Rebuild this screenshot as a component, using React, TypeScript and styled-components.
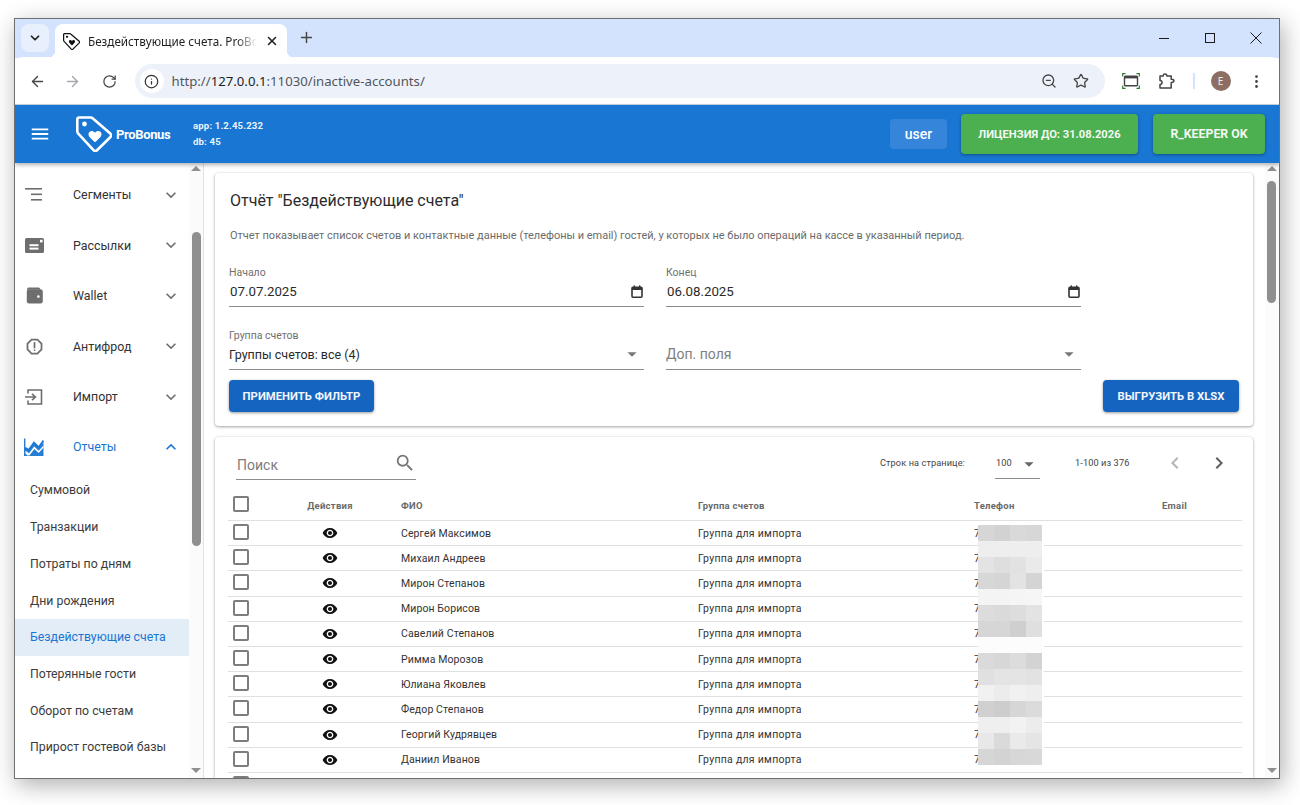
import React from 'react';
import styled, { createGlobalStyle } from 'styled-components';
import { ArrowLeft, ArrowRight, ChevronDown, Info, MoreVertical, Plus, RotateCw, Star, X, ZoomOut } from 'lucide-react';
import {
  MdArrowDropDown,
  MdChevronLeft,
  MdChevronRight,
  MdKeyboardArrowDown,
  MdKeyboardArrowUp,
  MdMenu,
  MdOutlineReport,
  MdSearch,
  MdVisibility,
} from 'react-icons/md';

const GlobalStyle = createGlobalStyle`
  html, body {
    margin: 0;
    padding: 0;
    height: 100%;
    background: #fff;
    overflow: hidden;
  }
  * { box-sizing: border-box; }
`;

const BrowserWindow = styled.div`
  width: 1266px;
  height: 761px;
  margin: 18px 0 0 14px;
  border: 1px solid #6f6f6f;
  box-shadow: 3px 6px 22px rgba(0, 0, 0, 0.32);
  display: flex;
  flex-direction: column;
  overflow: hidden;
  font-family: Roboto, "Liberation Sans", sans-serif;
  background: #fff;
`;

/* browser chrome */
const TabStrip = styled.div`
  height: 39px;
  flex: none;
  background: #d3e3fd;
  display: flex;
  align-items: flex-start;
  padding: 5px 0 0 6px;
  font-family: "Noto Sans", "Open Sans", sans-serif;
`;

const TabListButton = styled.div`
  width: 28px;
  height: 28px;
  border-radius: 8px;
  background: #e8f0fe;
  display: flex;
  align-items: center;
  justify-content: center;
  color: #1f1f1f;
  margin-right: 6px;
`;

const Tab = styled.div`
  position: relative;
  width: 232px;
  height: 34px;
  background: #fff;
  border-radius: 8px 8px 0 0;
  display: flex;
  align-items: center;
  padding: 0 8px;
  gap: 8px;
  &::after {
    content: '';
    position: absolute;
    right: -8px;
    bottom: 0;
    width: 8px;
    height: 8px;
    background: radial-gradient(circle at 100% 0, transparent 8px, #fff 8.5px);
  }
  &::before {
    content: '';
    position: absolute;
    left: -8px;
    bottom: 0;
    width: 8px;
    height: 8px;
    background: radial-gradient(circle at 0 0, transparent 8px, #fff 8.5px);
  }
`;

const TabTitle = styled.div`
  flex: 1;
  font-size: 11.7px;
  color: #1f1f1f;
  white-space: nowrap;
  overflow: hidden;
  -webkit-mask-image: linear-gradient(90deg, #000 88%, transparent);
  mask-image: linear-gradient(90deg, #000 88%, transparent);
`;

const NewTab = styled.div`
  margin: 5px 0 0 11px;
  color: #444;
  display: flex;
`;

const WindowControls = styled.div`
  margin-left: auto;
  display: flex;
  align-items: center;
  height: 28px;
  padding-right: 16px;
  gap: 32px;
`;

const ControlIcon = styled.svg`
  width: 14px;
  height: 14px;
  display: block;
  stroke: #1a1a1a;
  fill: none;
  stroke-width: 1;
`;

const Toolbar = styled.div`
  height: 48px;
  flex: none;
  background: #fff;
  border-radius: 8px 8px 0 0;
  margin-top: -1px;
  border-bottom: 1px solid #c9d3e3;
  display: flex;
  align-items: center;
  padding: 1px 0 0 4px;
  color: #444;
`;

const NavButton = styled.div<{ $disabled?: boolean; $width: number }>`
  width: ${(p) => p.$width}px;
  flex: none;
  display: flex;
  justify-content: center;
  color: ${(p) => (p.$disabled ? '#a5a8ad' : '#474747')};
`;

const Omnibox = styled.div`
  width: 970px;
  height: 34px;
  flex: none;
  margin-left: 5.5px;
  margin-right: 8px;
  border-radius: 17px;
  background: #edf2fa;
  display: flex;
  align-items: center;
  padding: 0 16px 0 5px;
`;

const InfoBadge = styled.div`
  width: 24px;
  height: 24px;
  border-radius: 50%;
  background: #fff;
  display: flex;
  align-items: center;
  justify-content: center;
  color: #333;
  margin-right: 8px;
`;

const Url = styled.div`
  flex: 1;
  font-size: 13.2px;
  color: #53565a;
  font-family: "Noto Sans", sans-serif;
  b { font-weight: 400; color: #1f1f1f; }
`;

const OmniActions = styled.div`
  display: flex;
  gap: 16px;
  color: #474747;
  align-items: center;
`;

const ToolbarSeparator = styled.div`
  width: 2px;
  height: 16px;
  background: #d3e3fd;
  margin: 0 16px 0 8px;
`;

const Avatar = styled.div`
  width: 20px;
  height: 20px;
  border-radius: 50%;
  background: #8d6e63;
  color: #f3ece9;
  font-size: 10px;
  font-family: "Noto Sans", sans-serif;
  display: flex;
  align-items: center;
  justify-content: center;
  margin-right: 17px;
`;

/* app header */
const AppBar = styled.header`
  height: 58px;
  flex: none;
  background: #1976d2;
  display: flex;
  align-items: center;
  position: relative;
  z-index: 3;
  padding: 0 14px;
  color: #fff;
  box-shadow: 0 2px 4px rgba(0, 0, 0, 0.3);
`;

const Burger = styled.div`
  display: flex;
  width: 22px;
  margin-right: 25px;
`;

const Brand = styled.div`
  display: flex;
  align-items: center;
  gap: 4px;
  width: 117px;
  font-size: 13px;
  font-weight: 700;
  letter-spacing: -0.35px;
`;

const Versions = styled.div`
  font-size: 9.6px;
  font-weight: 700;
  line-height: 16px;
  letter-spacing: 0.15px;
  margin-top: -1px;
  color: #eaf3fc;
`;

const UserChip = styled.div`
  margin-left: auto;
  width: 57px;
  height: 30px;
  border-radius: 4px;
  background: #3585db;
  display: flex;
  align-items: center;
  justify-content: center;
  font-size: 14px;
  font-weight: 500;
  margin-right: 14px;
`;

const StatusGroup = styled.div`
  display: flex;
  gap: 15px;
`;

const StatusButton = styled.div<{ $width: number; $size: number }>`
  width: ${(p) => p.$width}px;
  height: 40px;
  border-radius: 4px;
  background: #4caf50;
  display: flex;
  align-items: center;
  justify-content: center;
  font-size: ${(p) => p.$size}px;
  font-weight: 700;
  color: #f3f9f3;
  box-shadow: 0 1px 3px rgba(0, 0, 0, 0.35);
`;

/* body */
const Body = styled.div`
  flex: 1;
  min-height: 0;
  display: flex;
`;

const Sidebar = styled.aside`
  width: 174px;
  flex: none;
  padding-top: 6.8px;
  overflow: hidden;
  background: #fff;
`;

const ScrollTrack = styled.div`
  position: relative;
  width: 14px;
  flex: none;
  background: #fbfbfb;
`;

const ScrollThumb = styled.div<{ $top: number; $height: number; $left: number }>`
  position: absolute;
  left: ${(p) => p.$left}px;
  width: 9px;
  top: ${(p) => p.$top}px;
  height: ${(p) => p.$height}px;
  border-radius: 5px;
  background: #8f8f8f;
`;

const ScrollArrow = styled.div<{ $down?: boolean }>`
  position: absolute;
  left: 2px;
  width: 0;
  height: 0;
  border-left: 5px solid transparent;
  border-right: 5px solid transparent;
  ${(p) => (p.$down ? 'bottom: 5px; border-top: 5px solid #8f8f8f;' : 'top: 3px; border-bottom: 5px solid #8f8f8f;')}
`;

const NavRow = styled.div<{ $active?: boolean }>`
  height: 50.4px;
  display: flex;
  align-items: center;
  padding-left: 8px;
  font-size: 12.4px;
  color: ${(p) => (p.$active ? '#1976d2' : '#333')};
`;

const NavIcon = styled.div`
  width: 22px;
  height: 22px;
  color: #6e6e6e;
  display: flex;
  align-items: center;
  justify-content: center;
  margin-right: 28px;
`;

const NavLabel = styled.div`
  flex: 1;
`;

const NavCaret = styled.div<{ $active?: boolean }>`
  display: flex;
  margin-right: 8px;
  color: ${(p) => (p.$active ? '#1976d2' : '#6e6e6e')};
`;

const SubRow = styled.div<{ $selected?: boolean }>`
  height: 36.7px;
  display: flex;
  align-items: center;
  padding-left: 15px;
  font-size: 12.3px;
  color: ${(p) => (p.$selected ? '#1976d2' : '#3c3c3c')};
  background: ${(p) => (p.$selected ? '#e3edf8' : 'transparent')};
`;

const SidebarEdge = styled.div`
  width: 1px;
  flex: none;
  background: #e2e2e2;
`;

const Main = styled.main`
  flex: 1;
  min-width: 0;
  padding: 10px 12px 0 11px;
  overflow: hidden;
  background: #fff;
  display: flex;
  flex-direction: column;
  gap: 11px;
`;

const Card = styled.section`
  background: #fff;
  border-radius: 4px;
  box-shadow: 0 1px 3px rgba(0, 0, 0, 0.35), 0 0 2px rgba(0, 0, 0, 0.08);
  flex: none;
`;

const FilterCard = styled(Card)`
  height: 253px;
  padding: 18px 14px 0 14px;
`;

const Title = styled.h1`
  margin: 0 0 0 1px;
  font-size: 16px;
  font-weight: 400;
  line-height: 20px;
  color: #2b2b2b;
`;

const Description = styled.p`
  margin: 17px 0 0 1px;
  font-size: 10.97px;
  line-height: 16px;
  color: #6b6b6b;
`;

const FieldGrid = styled.div`
  display: grid;
  grid-template-columns: 415px 415px;
  column-gap: 22px;
  row-gap: 22px;
  margin-top: 22px;
`;

const Field = styled.div`
  height: 41px;
  border-bottom: 1px solid #8c8c8c;
`;

const FieldLabel = styled.div`
  font-size: 10.5px;
  line-height: 14px;
  color: #6f6f6f;
`;

const FieldValue = styled.div<{ $muted?: boolean; $size: number; $inset?: number }>`
  display: flex;
  align-items: center;
  justify-content: space-between;
  margin-top: 1px;
  height: 20px;
  font-size: ${(p) => p.$size}px;
  padding-left: ${(p) => p.$inset ?? 0}px;
  color: ${(p) => (p.$muted ? '#808080' : '#2b2b2b')};
`;

const FieldIcon = styled.div`
  display: flex;
  margin-right: 1px;
  color: #777;
`;

const ButtonRow = styled.div`
  display: flex;
  justify-content: space-between;
  margin-top: 10px;
`;

const PrimaryButton = styled.div<{ $width: number }>`
  width: ${(p) => p.$width}px;
  height: 32px;
  border-radius: 4px;
  background: #1565c0;
  color: #f2f6fc;
  font-size: 11.3px;
  font-weight: 700;
  display: flex;
  align-items: center;
  justify-content: center;
  box-shadow: 0 1px 3px rgba(0, 0, 0, 0.4);
`;

const TableCard = styled(Card)`
  flex: 1;
  padding: 0 11px 0 13px;
  border-radius: 4px 4px 0 0;
  overflow: hidden;
`;

const TableTools = styled.div`
  height: 53px;
  display: flex;
  align-items: flex-start;
  padding-top: 14px;
`;

const SearchBox = styled.div`
  width: 180px;
  height: 29px;
  margin-left: 8px;
  border-bottom: 1px solid #8c8c8c;
  display: flex;
  align-items: center;
  justify-content: space-between;
  font-size: 14px;
  color: #7d7d7d;
  padding-left: 1px;
`;

const SearchIcon = styled.div`
  display: flex;
  color: #777;
  margin-top: -4px;
`;

const Pager = styled.div`
  margin-left: auto;
  display: flex;
  align-items: flex-start;
  font-size: 9.2px;
  color: #444;
  letter-spacing: 0.1px;
  padding-right: 11px;
`;

const PagerLabel = styled.div`
  line-height: 24px;
  width: 115px;
`;

const PageSize = styled.div`
  width: 45px;
  height: 28px;
  border-bottom: 1px solid #8c8c8c;
  display: flex;
  justify-content: space-between;
  padding-left: 1px;
  line-height: 24px;
  margin-right: 35px;
`;

const PageSizeArrow = styled.div`
  display: flex;
  color: #666;
  margin-top: 2px;
`;

const PagerRange = styled.div`
  line-height: 24px;
  width: 88px;
`;

const PagerArrow = styled.div<{ $disabled?: boolean }>`
  display: flex;
  width: ${(p) => (p.$disabled ? 44 : 24)}px;
  color: ${(p) => (p.$disabled ? '#b5b5b5' : '#5e5e5e')};
`;

const TableArea = styled.div`
  position: relative;
`;

const TableRow = styled.div<{ $head?: boolean }>`
  display: grid;
  grid-template-columns: 60px 84px 326px 276px 188px 1fr;
  height: ${(p) => (p.$head ? 31 : 25.2)}px;
  border-bottom: 1px solid #e0e0e0;
  align-items: center;
  font-size: ${(p) => (p.$head ? '9.5px' : '10.5px')};
  font-weight: ${(p) => (p.$head ? 700 : 400)};
  color: ${(p) => (p.$head ? '#6a6a6a' : '#333')};
  letter-spacing: ${(p) => (p.$head ? '0.25px' : '0.1px')};
`;

const CheckCell = styled.div`
  padding-left: 5px;
  margin-top: -2px;
  display: flex;
`;

const Checkbox = styled.div`
  width: 16px;
  height: 16px;
  border: 2px solid #7d7d7d;
  border-radius: 2px;
`;

const ActionCell = styled.div`
  display: flex;
  justify-content: center;
  color: inherit;
`;

const EyeIcon = styled(MdVisibility)`
  color: #111;
`;

const TextCell = styled.div<{ $inset?: number; $wide?: boolean }>`
  padding-left: ${(p) => p.$inset ?? 0}px;
  white-space: nowrap;
  ${(p) => p.$wide && 'letter-spacing: 0.27px;'}
`;

const Mosaic = styled.div`
  position: absolute;
  left: 750px;
  top: 35px;
  display: grid;
  grid-template-columns: repeat(4, 16px);
  grid-auto-rows: 16px;
  border-right: 2px solid #fff;
`;

const MosaicCell = styled.div<{ $shade: string }>`
  background: #${(p) => p.$shade.repeat(3)};
`;

const LogoIcon = ({ size, color }: { size: number; color: string }) => (
  <svg width={size} height={size} viewBox="0 0 36 36" fill="none">
    <path
      d="M3 1.5H14.5C15.4 1.5 16.2 1.8 16.9 2.5L34.3 17.6C35.3 18.5 35.4 20 34.5 21L21 34.2C20 35.2 18.5 35.2 17.5 34.2L2.3 17.7C1.7 17 1.3 16.3 1.3 15.4V3.2C1.3 2.2 2 1.5 3 1.5Z"
      stroke={color}
      strokeWidth="2.6"
      strokeLinejoin="round"
    />
    <circle cx="8.5" cy="8" r="2.4" fill={color} />
    <path
      d="M19 27.5L17.6 26.2C12.6 21.7 9.4 19 9.4 15.6C9.4 13 11.4 11 14.1 11C15.6 11 17.7 12 19 13.6C20.3 12 21.9 11 23.9 11C26.6 11 28.6 13 28.6 15.6C28.6 19 25.4 21.7 20.4 26.2Z"
      transform="translate(19 20.5) scale(.68) translate(-19 -19)"
      fill={color}
    />
  </svg>
);

const SegmentsIcon = () => (
  <svg width="18" height="14" viewBox="0 0 18 14" fill="currentColor">
    <rect x="0" y="0" width="17" height="1.6" />
    <rect x="6" y="5.5" width="11" height="1.6" />
    <rect x="6" y="11" width="11" height="1.6" />
  </svg>
);

const MailingIcon = () => (
  <svg width="19" height="15" viewBox="0 0 19 15">
    <rect width="19" height="15" rx="1.6" fill="currentColor" />
    <rect x="15" y="1.8" width="2.6" height="2.6" fill="#fff" />
    <rect x="4.5" y="6.2" width="9" height="2" fill="#fff" />
    <rect x="4.5" y="9.6" width="9" height="2" fill="#fff" />
  </svg>
);

const WalletIcon = () => (
  <svg width="17" height="17" viewBox="0 0 17 17">
    <path d="M2.5 0.6H12.5C13.5 0.6 14.2 1.4 14.2 2.4H2.8C1.8 2.4 1.2 3 1 3.6C1 1.6 1.5 0.6 2.5 0.6Z" fill="currentColor" />
    <rect x="0.8" y="2.2" width="16" height="14.4" rx="2.4" fill="currentColor" />
    <circle cx="12.4" cy="9.6" r="1.3" fill="#fff" />
  </svg>
);

const ImportIcon = () => (
  <svg width="18" height="16" viewBox="0 0 18 16" fill="none" stroke="currentColor" strokeWidth="1.6">
    <path d="M3 4.5V1H16.5V15H3V11.5" />
    <path d="M0 8H10M7 4.8L10.4 8L7 11.2" />
  </svg>
);

const ReportsIcon = () => (
  <svg width="20" height="18" viewBox="0 0 20 18">
    <path d="M0 0.5V18H19.5V4L14.6 9.2L10 4.6L4.6 12L1.4 9.6V0.5Z" fill="#1976d2" opacity="0.95" />
    <path d="M1.5 12.8L5 15.2L10.2 8.4L14.7 12.8L19.5 7.4V9.5L14.7 15L10.4 11L5.4 17.5H3.6L1.5 15.7Z" fill="#fff" />
    <path d="M1.4 9.6L4.6 12L10 4.6L14.6 9.2L19.5 2.6" fill="none" stroke="#1976d2" strokeWidth="1.7" />
  </svg>
);

const CalendarIcon = () => (
  <svg width="12" height="13" viewBox="0 0 12 13" fill="none">
    <rect x="1" y="2.2" width="10" height="10" rx="1" stroke="#333" strokeWidth="1.6" />
    <rect x="1" y="2" width="10" height="3" fill="#333" />
    <rect x="2.6" y="0.4" width="1.4" height="2" fill="#333" />
    <rect x="8" y="0.4" width="1.4" height="2" fill="#333" />
  </svg>
);

const CaptureIcon = () => (
  <svg width="18" height="16" viewBox="0 0 18 16" fill="none">
    <rect x="2.5" y="3.2" width="13" height="9.6" rx="1" stroke="#444" strokeWidth="1.4" />
    <rect x="2.5" y="3.2" width="13" height="2.2" fill="#444" />
    <path d="M0.7 3.5V0.7H3.5M14.5 0.7H17.3V3.5M17.3 12.5V15.3H14.5M3.5 15.3H0.7V12.5" stroke="#2e7d32" strokeWidth="1.2" />
  </svg>
);

const ExtensionIcon = () => (
  <svg width="17" height="16" viewBox="0 0 17 16" fill="none" stroke="#444" strokeWidth="1.5" strokeLinejoin="round">
    <path d="M2 3H5.2C5.2 1.6 6 0.9 7 0.9C8 0.9 8.8 1.6 8.8 3H13.2V6.2C15 6.2 15.9 6.9 15.9 7.8C15.9 8.7 15 9.4 13.2 9.4V14.9H2V11.4C3.4 11.4 4 10.6 4 9.4C4 8.2 3.4 7.4 2 7.4Z" />
  </svg>
);

const navItems = [
  { label: 'Сегменты', icon: <SegmentsIcon /> },
  { label: 'Рассылки', icon: <MailingIcon /> },
  { label: 'Wallet', icon: <WalletIcon /> },
  { label: 'Антифрод', icon: <MdOutlineReport size={21} /> },
  { label: 'Импорт', icon: <ImportIcon /> },
];

const subItems = [
  'Суммовой',
  'Транзакции',
  'Потраты по дням',
  'Дни рождения',
  'Бездействующие счета',
  'Потерянные гости',
  'Оборот по счетам',
  'Прирост гостевой базы',
];

const guests = [
  'Сергей Максимов',
  'Михаил Андреев',
  'Мирон Степанов',
  'Мирон Борисов',
  'Савелий Степанов',
  'Римма Морозов',
  'Юлиана Яковлев',
  'Федор Степанов',
  'Георгий Кудрявцев',
  'Даниил Иванов',
  '',
];

const mosaic = [
  ['d6', 'd2', 'd9', 'd7'],
  ['ee', 'ee', 'ee', 'ee'],
  ['e3', 'de', 'e2', 'ea'],
  ['d7', 'd5', 'e3', 'd4'],
  ['f4', 'f4', 'f5', 'f6'],
  ['dc', 'da', 'dd', 'e3'],
  ['d6', 'd6', 'cf', 'df'],
  ['fc', 'fc', 'fc', 'fc'],
  ['da', 'd7', 'dc', 'd3'],
  ['e0', 'e4', 'e4', 'e2'],
  ['f1', 'ec', 'f1', 'ee'],
  ['d0', 'cd', 'd6', 'db'],
  ['ef', 'ef', 'f2', 'ec'],
  ['e8', 'da', 'ea', 'e5'],
  ['d6', 'd3', 'd7', 'd8'],
];

const App: React.FC = () => {
  return (
    <>
      <GlobalStyle />
      <BrowserWindow>
        <TabStrip>
          <TabListButton>
            <ChevronDown size={14} strokeWidth={3} />
          </TabListButton>
          <Tab>
            <LogoIcon size={17} color="#111" />
            <TabTitle>Бездействующие счета. ProBonus</TabTitle>
            <X size={14} strokeWidth={2.6} color="#222" />
          </Tab>
          <NewTab>
            <Plus size={17} strokeWidth={2} />
          </NewTab>
          <WindowControls>
            <ControlIcon viewBox="0 0 14 14">
              <path d="M2 7.5H12" />
            </ControlIcon>
            <ControlIcon viewBox="0 0 14 14">
              <rect x="2.5" y="2.5" width="9" height="9" />
            </ControlIcon>
            <ControlIcon viewBox="0 0 14 14">
              <path d="M1.5 1.5L12.5 12.5M12.5 1.5L1.5 12.5" />
            </ControlIcon>
          </WindowControls>
        </TabStrip>
        <Toolbar>
          <NavButton $width={36}>
            <ArrowLeft size={17} />
          </NavButton>
          <NavButton $width={35} $disabled>
            <ArrowRight size={17} />
          </NavButton>
          <NavButton $width={39}>
            <RotateCw size={15} />
          </NavButton>
          <Omnibox>
            <InfoBadge>
              <Info size={15} />
            </InfoBadge>
            <Url>
              http://<b>127.0.0.1</b>:11030/inactive-accounts/
            </Url>
            <OmniActions>
              <ZoomOut size={16} />
              <Star size={16} />
            </OmniActions>
          </Omnibox>
          <NavButton $width={36}>
            <CaptureIcon />
          </NavButton>
          <NavButton $width={36}>
            <ExtensionIcon />
          </NavButton>
          <ToolbarSeparator />
          <Avatar>E</Avatar>
          <MoreVertical size={17} color="#444" />
        </Toolbar>
        <AppBar>
          <Burger>
            <MdMenu size={24} />
          </Burger>
          <Brand>
            <LogoIcon size={36} color="#fff" />
            ProBonus
          </Brand>
          <Versions>
            app: 1.2.45.232
            <br />
            db: 45
          </Versions>
          <UserChip>user</UserChip>
          <StatusGroup>
            <StatusButton $width={177} $size={11.2}>ЛИЦЕНЗИЯ ДО: 31.08.2026</StatusButton>
            <StatusButton $width={112} $size={12.3}>R_KEEPER OK</StatusButton>
          </StatusGroup>
        </AppBar>
        <Body>
          <Sidebar>
            {navItems.map((item) => (
              <NavRow key={item.label}>
                <NavIcon>{item.icon}</NavIcon>
                <NavLabel>{item.label}</NavLabel>
                <NavCaret>
                  <MdKeyboardArrowDown size={20} />
                </NavCaret>
              </NavRow>
            ))}
            <NavRow $active>
              <NavIcon>
                <ReportsIcon />
              </NavIcon>
              <NavLabel>Отчеты</NavLabel>
              <NavCaret $active>
                <MdKeyboardArrowUp size={20} />
              </NavCaret>
            </NavRow>
            {subItems.map((item) => (
              <SubRow key={item} $selected={item === 'Бездействующие счета'}>
                {item}
              </SubRow>
            ))}
          </Sidebar>
          <ScrollTrack>
            <ScrollArrow />
            <ScrollThumb $left={3} $top={69} $height={314} />
            <ScrollArrow $down />
          </ScrollTrack>
          <SidebarEdge />
          <Main>
            <FilterCard>
              <Title>Отчёт "Бездействующие счета"</Title>
              <Description>
                Отчет показывает список счетов и контактные данные (телефоны и email) гостей, у которых не было операций на кассе в указанный период.
              </Description>
              <FieldGrid>
                <Field>
                  <FieldLabel>Начало</FieldLabel>
                  <FieldValue $size={13.3} $inset={1}>
                    07.07.2025
                    <FieldIcon>
                      <CalendarIcon />
                    </FieldIcon>
                  </FieldValue>
                </Field>
                <Field>
                  <FieldLabel>Конец</FieldLabel>
                  <FieldValue $size={13.3} $inset={1}>
                    06.08.2025
                    <FieldIcon>
                      <CalendarIcon />
                    </FieldIcon>
                  </FieldValue>
                </Field>
                <Field>
                  <FieldLabel>Группа счетов</FieldLabel>
                  <FieldValue $size={12.5}>
                    Группы счетов: все (4)
                    <FieldIcon>
                      <MdArrowDropDown size={22} />
                    </FieldIcon>
                  </FieldValue>
                </Field>
                <Field>
                  <FieldLabel>&nbsp;</FieldLabel>
                  <FieldValue $size={14} $muted>
                    Доп. поля
                    <FieldIcon>
                      <MdArrowDropDown size={22} />
                    </FieldIcon>
                  </FieldValue>
                </Field>
              </FieldGrid>
              <ButtonRow>
                <PrimaryButton $width={145}>ПРИМЕНИТЬ ФИЛЬТР</PrimaryButton>
                <PrimaryButton $width={136}>ВЫГРУЗИТЬ В XLSX</PrimaryButton>
              </ButtonRow>
            </FilterCard>
            <TableCard>
              <TableTools>
                <SearchBox>
                  Поиск
                  <SearchIcon>
                    <MdSearch size={22} />
                  </SearchIcon>
                </SearchBox>
                <Pager>
                  <PagerLabel>Строк на странице:</PagerLabel>
                  <PageSize>
                    100
                    <PageSizeArrow>
                      <MdArrowDropDown size={22} />
                    </PageSizeArrow>
                  </PageSize>
                  <PagerRange>1-100 из 376</PagerRange>
                  <PagerArrow $disabled>
                    <MdChevronLeft size={24} />
                  </PagerArrow>
                  <PagerArrow>
                    <MdChevronRight size={24} />
                  </PagerArrow>
                </Pager>
              </TableTools>
              <TableArea>
                <TableRow $head>
                  <CheckCell>
                    <Checkbox />
                  </CheckCell>
                  <ActionCell>Действия</ActionCell>
                  <TextCell $inset={29}>ФИО</TextCell>
                  <TextCell>Группа счетов</TextCell>
                  <TextCell>Телефон</TextCell>
                  <TextCell>Email</TextCell>
                </TableRow>
                {guests.map((name, i) => (
                  <TableRow key={i}>
                    <CheckCell>
                      <Checkbox />
                    </CheckCell>
                    <ActionCell>{name && <EyeIcon size={16} />}</ActionCell>
                    <TextCell $inset={29}>{name}</TextCell>
                    <TextCell $wide>{name && 'Группа для импорта'}</TextCell>
                    <TextCell>{name && '7'}</TextCell>
                    <TextCell />
                  </TableRow>
                ))}
                <Mosaic>
                  {mosaic.flat().map((shade, i) => (
                    <MosaicCell key={i} $shade={shade} />
                  ))}
                </Mosaic>
              </TableArea>
            </TableCard>
          </Main>
          <ScrollTrack>
            <ScrollArrow />
            <ScrollThumb $left={2} $top={18} $height={122} />
            <ScrollArrow $down />
          </ScrollTrack>
        </Body>
      </BrowserWindow>
    </>
  );
};

export default App;
